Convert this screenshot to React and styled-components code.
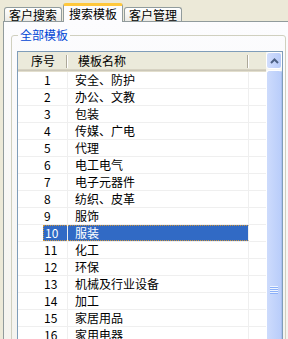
import React from 'react';
import styled, { createGlobalStyle } from 'styled-components';

const GlobalStyle = createGlobalStyle`
  body {
    margin: 0;
    background: #ece9d8;
    font-family: "Noto Sans CJK SC", "Liberation Sans", sans-serif;
    font-size: 12px;
    color: #000;
  }
`;

const Window = styled.div`
  width: 288px;
  height: 339px;
  overflow: hidden;
  background: #ece9d8;
`;

const TabStrip = styled.div`
  display: flex;
  align-items: flex-end;
  height: 21px;
  padding-left: 4px;
  position: relative;
  z-index: 1;
`;

const Tab = styled.div`
  box-sizing: border-box;
  height: ${p => (p.$active ? 19 : 14)}px;
  margin-left: ${p => p.$gap}px;
  margin-bottom: ${p => (p.$active ? -1 : 0)}px;
  padding: 0 ${p => (p.$active ? 5 : 4)}px;
  border: 1px solid #919b9c;
  border-bottom: none;
  border-top: ${p => (p.$active ? '3px solid #ffc83c' : '1px solid #919b9c')};
  border-radius: 3px 3px 0 0;
  background: ${p => (p.$active ? '#fcfcfe' : 'linear-gradient(#ffffff, #ecebe6)')};
  display: flex;
  align-items: center;
  line-height: 12px;
  white-space: nowrap;
`;

const Panel = styled.div`
  box-sizing: border-box;
  margin-left: 3px;
  width: 292px;
  height: 330px;
  border: 1px solid #919b9c;
  background: linear-gradient(#fcfcfe, #f4f3ee);
  padding: 6px 0 0 7px;
`;

const GroupBox = styled.fieldset`
  box-sizing: border-box;
  margin: 0;
  width: 275px;
  height: 330px;
  border: 1px solid #d0d0bf;
  border-radius: 3px;
  padding: 9px 2px 0 5px;
`;

const GroupTitle = styled.legend`
  margin-left: 1px;
  padding: 0 2px;
  color: #0046d5;
  line-height: 14px;
`;

const ListBox = styled.div`
  box-sizing: border-box;
  width: 266px;
  height: 300px;
  border: 1px solid #7f9db9;
  background: #fff;
  display: flex;
`;

const Grid = styled.div`
  flex: 1;
  display: flex;
  flex-direction: column;
`;

const HeaderRow = styled.div`
  display: grid;
  grid-template-columns: 50px 181px 1fr;
  height: 20px;
  flex-shrink: 0;
  background: #ebeadb;
  box-shadow: inset 0 -1px #e2decd, inset 0 -2px #cbc7b8, inset 0 -3px #d6d2c2;
`;

const HeaderCell = styled.div`
  display: flex;
  align-items: center;
  justify-content: ${p => (p.$center ? 'center' : 'flex-start')};
  padding: 0 0 3px ${p => (p.$center ? 0 : 10)}px;
  background:
    linear-gradient(#aca899, #aca899) right 1px top 3px / 1px 13px no-repeat,
    linear-gradient(#fff, #fff) right 0 top 3px / 1px 13px no-repeat;
`;

const Row = styled.div`
  display: grid;
  grid-template-columns: 50px 181px 1fr;
  height: 17px;
  flex-shrink: 0;
  box-sizing: border-box;
  border-bottom: 1px solid #efefef;
`;

const NumCell = styled.div`
  display: flex;
  align-items: stretch;
  padding-left: 25px;
  border-right: 1px solid #efefef;
  line-height: 16px;
`;

const NumText = styled.span`
  flex: 1;
  padding-left: 1px;
  box-sizing: border-box;
  background: ${p => (p.$selected ? '#316ac5' : 'transparent')};
  color: ${p => (p.$selected ? '#fff' : '#000')};
  border: ${p => (p.$selected ? '1px dotted #ce953a' : 'none')};
  border-right: none;
  line-height: ${p => (p.$selected ? 14 : 16)}px;
`;

const NameCell = styled.div`
  box-sizing: border-box;
  padding-left: 7px;
  border-right: 1px solid #efefef;
  background: ${p => (p.$selected ? '#316ac5' : 'transparent')};
  color: ${p => (p.$selected ? '#fff' : '#000')};
  border-top: ${p => (p.$selected ? '1px dotted #ce953a' : 'none')};
  border-bottom: ${p => (p.$selected ? '1px dotted #ce953a' : 'none')};
  line-height: ${p => (p.$selected ? 14 : 16)}px;
  white-space: nowrap;
`;

const ScrollBar = styled.div`
  width: 16px;
  display: flex;
  flex-direction: column;
  gap: 1px;
  background: #f7f6f2;
`;

const ScrollButton = styled.div`
  box-sizing: border-box;
  height: 17px;
  flex-shrink: 0;
  border: 1px solid #fff;
  border-radius: 3px;
  background: linear-gradient(90deg, #d2defd, #b8cbf9);
  display: flex;
  align-items: center;
  justify-content: center;
`;

const Thumb = styled.div`
  box-sizing: border-box;
  height: 440px;
  flex-shrink: 0;
  border: 1px solid #fff;
  border-right-color: #a9bff0;
  border-radius: 3px;
  background: linear-gradient(90deg, #cddbfc, #b9cdfa);
  display: flex;
  align-items: center;
  justify-content: center;
`;

const items = [
  '安全、防护', '办公、文教', '包装', '传媒、广电', '代理', '电工电气',
  '电子元器件', '纺织、皮革', '服饰', '服装', '化工', '环保',
  '机械及行业设备', '加工', '家居用品', '家用电器', '建筑、建材',
];

const SELECTED = 10;

export default function App() {
  return (
    <Window>
      <GlobalStyle />
      <TabStrip>
        <Tab $gap={0}>客户搜索</Tab>
        <Tab $gap={1} $active>搜索模板</Tab>
        <Tab $gap={1}>客户管理</Tab>
      </TabStrip>
      <Panel>
        <GroupBox>
          <GroupTitle>全部模板</GroupTitle>
          <ListBox>
            <Grid>
              <HeaderRow>
                <HeaderCell $center>序号</HeaderCell>
                <HeaderCell>模板名称</HeaderCell>
                <div />
              </HeaderRow>
              {items.map((name, i) => {
                const n = i + 1;
                const sel = n === SELECTED;
                return (
                  <Row key={n}>
                    <NumCell>
                      <NumText $selected={sel}>{n}</NumText>
                    </NumCell>
                    <NameCell $selected={sel}>{name}</NameCell>
                    <div />
                  </Row>
                );
              })}
            </Grid>
            <ScrollBar>
              <ScrollButton>
                <svg width="9" height="6" viewBox="0 0 9 6">
                  <polyline points="1,5 4.5,1.5 8,5" fill="none" stroke="#4d6185" strokeWidth="2" />
                </svg>
              </ScrollButton>
              <Thumb>
                <svg width="8" height="8" viewBox="0 0 8 8">
                  <rect x="0" y="0" width="8" height="1" fill="#eef4fe" />
                  <rect x="0" y="1" width="8" height="1" fill="#8cb0f8" />
                  <rect x="0" y="2" width="8" height="1" fill="#eef4fe" />
                  <rect x="0" y="3" width="8" height="1" fill="#8cb0f8" />
                  <rect x="0" y="4" width="8" height="1" fill="#eef4fe" />
                  <rect x="0" y="5" width="8" height="1" fill="#8cb0f8" />
                  <rect x="0" y="6" width="8" height="1" fill="#eef4fe" />
                  <rect x="0" y="7" width="8" height="1" fill="#8cb0f8" />
                </svg>
              </Thumb>
            </ScrollBar>
          </ListBox>
        </GroupBox>
      </Panel>
    </Window>
  );
}
